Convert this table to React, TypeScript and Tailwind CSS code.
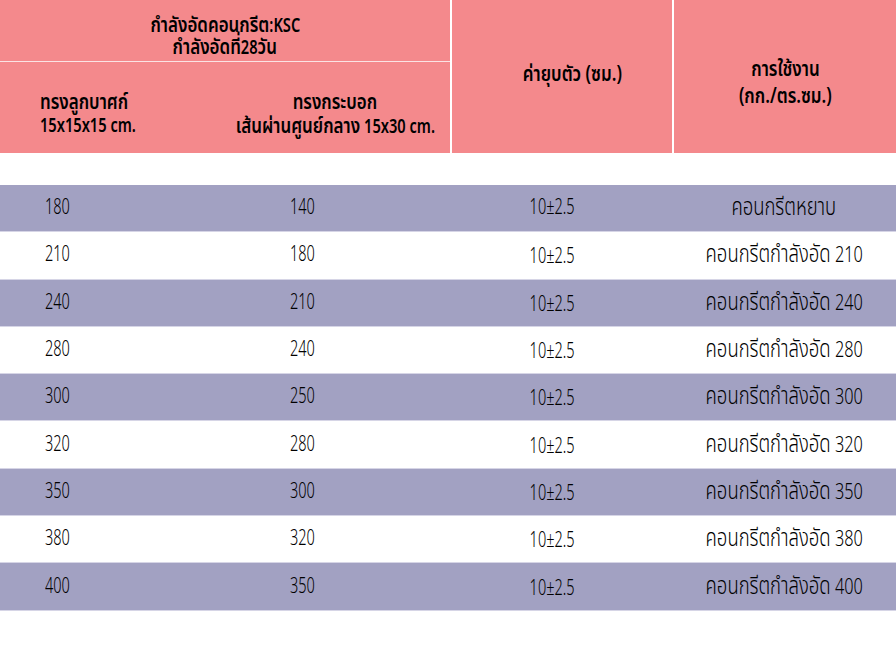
const rows = [
  ["180", "140", "คอนกรีตหยาบ", ""],
  ["210", "180", "คอนกรีตกำลังอัด", "210"],
  ["240", "210", "คอนกรีตกำลังอัด", "240"],
  ["280", "240", "คอนกรีตกำลังอัด", "280"],
  ["300", "250", "คอนกรีตกำลังอัด", "300"],
  ["320", "280", "คอนกรีตกำลังอัด", "320"],
  ["350", "300", "คอนกรีตกำลังอัด", "350"],
  ["380", "320", "คอนกรีตกำลังอัด", "380"],
  ["400", "350", "คอนกรีตกำลังอัด", "400"],
];

const font = { fontFamily: '"Noto Sans Thai", "Noto Sans", sans-serif' };

// the reference uses a condensed Thai face, so lines are squeezed horizontally
function Hd({ children, origin = "origin-center" }: { children: React.ReactNode; origin?: string }) {
  return <span className={"inline-block whitespace-nowrap scale-x-[0.77] " + origin}>{children}</span>;
}

function Num({ children }: { children: React.ReactNode }) {
  return <span className="inline-block whitespace-nowrap scale-x-[0.66] origin-left">{children}</span>;
}

function Th({ children }: { children: React.ReactNode }) {
  return <span className="text-[22px]">{children}</span>;
}

export default function App() {
  return (
    <div className="w-[896px] h-[667px] bg-white text-black overflow-hidden" style={font}>
      {/* header */}
      <div className="grid grid-cols-[450px_220px_222px] gap-x-[2px] h-[153px] text-[19px] font-semibold">
        <div className="flex flex-col gap-y-[1px] bg-[#fbe3e4]">
          <div className="h-[61px] bg-[#f4898c] flex flex-col items-center justify-center leading-[21px] pt-[12px]">
            <Hd><Th>กำลังอัดคอนกรีต</Th>:KSC</Hd>
            <Hd><Th>กำลังอัดที่</Th>28<Th>วัน</Th></Hd>
          </div>
          <div className="flex-1 bg-[#f4898c] grid grid-cols-[225px_225px] leading-[23px]">
            <div className="flex flex-col justify-center items-start pl-[40px] pt-[14px]">
              <Hd origin="origin-left"><Th>ทรงลูกบาศก์</Th></Hd>
              <Hd origin="origin-left">15x15x15 cm.</Hd>
            </div>
            <div className="flex flex-col justify-center items-center pt-[14px] pr-[5px]">
              <Hd><Th>ทรงกระบอก</Th></Hd>
              <Hd><Th>เส้นผ่านศูนย์กลาง</Th> 15x30 cm.</Hd>
            </div>
          </div>
        </div>
        <div className="bg-[#f4898c] flex items-center justify-center pl-[20px] pb-[4px]">
          <Hd><Th>ค่ายุบตัว (ซม.)</Th></Hd>
        </div>
        <div className="bg-[#f4898c] flex flex-col items-center justify-center pt-[14px] leading-[26px]">
          <Hd><Th>การใช้งาน</Th></Hd>
          <Hd><Th>(กก./ตร.ซม.)</Th></Hd>
        </div>
      </div>

      {/* body */}
      <div className="pt-[32px]">
        {rows.map((r, i) => (
          <div
            key={i}
            className={
              "grid grid-cols-[245px_205px_222px_224px] h-[47.3px] items-center text-[22px] leading-[30px] font-light border-b border-[#d6d5e6] " +
              (i % 2 === 0 ? "bg-[#a2a1c2]" : "bg-white")
            }
          >
            <div className="pl-[45px]">
              <Num>{r[0]}</Num>
            </div>
            <div className="pl-[45px]">
              <Num>{r[1]}</Num>
            </div>
            <div className={"text-center pr-[18px] " + (i > 0 ? "pt-[4px]" : "")}>
              <span className="inline-block whitespace-nowrap scale-x-[0.66]">10±2.5</span>
            </div>
            <div className="text-center">
              <span className="inline-block whitespace-nowrap scale-x-[0.74]">
                <span className="text-[25px]">{r[2]}</span>
                {r[3] ? " " + r[3] : ""}
              </span>
            </div>
          </div>
        ))}
      </div>
    </div>
  );
}
